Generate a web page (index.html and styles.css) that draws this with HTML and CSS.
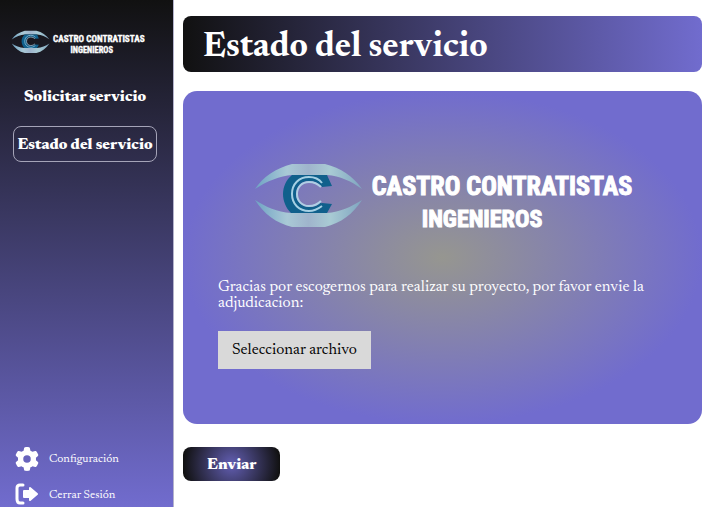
FILE: index.html
```html
<!DOCTYPE html>
<html lang="es">
<head>
<meta charset="utf-8">
<meta name="viewport" content="width=device-width, initial-scale=1">
<title>Estado del servicio</title>
<link rel="stylesheet" href="styles.css">
</head>
<body>
<svg class="sprite" aria-hidden="true">
  <defs>
    <linearGradient id="lid" x1="0" x2="1" y1="0" y2="0">
      <stop offset="0" stop-color="#6fa3c4"/>
      <stop offset=".3" stop-color="#a9c9d6"/>
      <stop offset=".5" stop-color="#9fb4cc"/>
      <stop offset=".7" stop-color="#a9cbd4"/>
      <stop offset="1" stop-color="#7fa5c0"/>
    </linearGradient>
    <symbol id="logo" viewBox="0 0 380 66">
      <path fill="url(#lid)" d="M2 26C10 14 23 5 39 1h33c16 4 28 12 37 25C98 18 87 13 74 12H39C27 13 14 18 2 26Z"/>
      <path fill="url(#lid)" d="M2 37c11 7 22 12 36 13h36c13-1 24-6 35-13C100 51 88 60 72 64H39C23 60 11 51 2 37Z"/>
      <path fill="#10608c" d="M39 12h35l5 11-10 1c-4-5-8-7-13-7-8 0-13 6-13 14s5 14 13 14c5 0 9-2 13-5l10 1-5 9H38C33 45 30 38 30 31s3-14 9-19Z"/>
      <path fill="none" stroke="#a5d0e4" stroke-width="2" d="M69 20c-3-4-8-6-13-6-10 0-17 7-17 17s7 17 17 17c5 0 9-2 13-5"/>
      <path fill="none" stroke="#10608c" stroke-width="2" d="M68 22c-3-4-7-5-12-5-9 0-14 6-14 14s6 14 14 14c5 0 9-1 12-5"/>
      <path fill="none" stroke="#b0cfe4" stroke-width="2" d="M68 24c-3-3-7-5-12-5-7 0-12 5-12 12s5 12 12 12c5 0 9-2 12-5"/>
      <text class="logo-name" x="249" y="32">CASTRO CONTRATISTAS</text>
      <text class="logo-sub" x="229" y="64">INGENIEROS</text>
    </symbol>
  </defs>
</svg>
<div class="layout">
  <aside class="sidebar">
    <svg class="sidebar-logo" role="img" aria-label="Castro Contratistas Ingenieros"><use href="#logo"/></svg>
    <nav class="menu">
      <a class="menu-link" href="#">Solicitar servicio</a>
      <a class="menu-link active" href="#" aria-current="page">Estado del servicio</a>
    </nav>
    <nav class="account">
      <a class="account-link" href="#">
        <svg class="icon" viewBox="0 0 512 512" aria-hidden="true"><path fill="currentColor" d="M495.9 166.6c3.2 8.7.5 18.4-6.4 24.6l-43.3 39.4c1.1 8.3 1.7 16.8 1.7 25.4s-.6 17.1-1.7 25.4l43.3 39.4c6.9 6.2 9.6 15.9 6.4 24.6-4.4 11.9-9.7 23.3-15.8 34.3l-4.7 8.1c-6.6 11-14 21.4-22.1 31.2-5.9 7.2-15.7 9.6-24.5 6.8l-55.7-17.7c-13.4 10.3-28.2 18.9-44 25.4l-12.5 57.1c-2 9.1-9 16.3-18.2 17.8-13.8 2.3-28 3.5-42.5 3.5s-28.7-1.2-42.5-3.5c-9.2-1.5-16.2-8.7-18.2-17.8l-12.5-57.1c-15.8-6.5-30.6-15.1-44-25.4L83.1 425.9c-8.8 2.8-18.6.3-24.5-6.8-8.1-9.8-15.5-20.2-22.1-31.2l-4.7-8.1c-6.1-11-11.4-22.4-15.8-34.3-3.2-8.7-.5-18.4 6.4-24.6l43.3-39.4C64.6 273.1 64 264.6 64 256s.6-17.1 1.7-25.4L22.4 191.2c-6.9-6.2-9.6-15.9-6.4-24.6 4.4-11.9 9.7-23.3 15.8-34.3l4.7-8.1c6.6-11 14-21.4 22.1-31.2 5.9-7.2 15.7-9.6 24.5-6.8l55.7 17.7c13.4-10.3 28.2-18.9 44-25.4l12.5-57.1c2-9.1 9-16.3 18.2-17.8C227.3 1.2 241.5 0 256 0s28.7 1.2 42.5 3.5c9.2 1.5 16.2 8.7 18.2 17.8l12.5 57.1c15.8 6.5 30.6 15.1 44 25.4l55.7-17.7c8.8-2.8 18.6-.3 24.5 6.8 8.1 9.8 15.5 20.2 22.1 31.2l4.7 8.1c6.1 11 11.4 22.4 15.8 34.3zM256 336a80 80 0 1 0 0-160 80 80 0 1 0 0 160z"/></svg>
        <span>Configuración</span>
      </a>
      <a class="account-link" href="#">
        <svg class="icon" viewBox="0 0 24 24" aria-hidden="true"><path fill="none" stroke="currentColor" stroke-width="3" stroke-linecap="round" d="M8 2H5Q2 2 2 5v11q0 4 3 4h3"/><path fill="currentColor" stroke="currentColor" stroke-width="2" stroke-linejoin="round" d="M9 8h6V5l7 6-7 6v-3H9Z"/></svg>
        <span>Cerrar Sesión</span>
      </a>
    </nav>
  </aside>
  <main class="main">
    <h1 class="title">Estado del servicio</h1>
    <form class="form">
      <section class="card">
        <svg class="card-logo" role="img" aria-label="Castro Contratistas Ingenieros"><use href="#logo"/></svg>
        <p class="message">Gracias por escogernos para realizar su proyecto, por favor envie la adjudicacion:</p>
        <input class="file-input" type="file" id="archivo">
        <label class="file-label" for="archivo">Seleccionar archivo</label>
      </section>
      <button class="submit" type="button">Enviar</button>
    </form>
  </main>
</div>
</body>
</html>
```
FILE: styles.css
```css
* {
  box-sizing: border-box;
}

body {
  margin: 0;
  background: #fff;
  color: #fff;
  font-family: Newsreader, "Liberation Serif", serif;
}

a {
  color: inherit;
  text-decoration: none;
}

.sprite {
  position: absolute;
  width: 0;
  height: 0;
}

.logo-name,
.logo-sub {
  font-family: Impact, "Roboto Condensed", "Liberation Sans Narrow", sans-serif;
  font-weight: 700;
  text-anchor: middle;
  fill: #fff;
  stroke: #fff;
  stroke-width: 1px;
}

.logo-name {
  font-size: 26px;
}

.logo-sub {
  font-size: 24px;
}

.layout {
  display: flex;
  min-height: 100vh;
}

.sidebar {
  display: flex;
  flex-direction: column;
  flex: 0 0 174px;
  padding: 30px 16px 0 11px;
  border-right: 1px solid #b4b3cc;
  background: linear-gradient(#111, #716cce);
}

.sidebar-logo {
  width: 134px;
  height: 24px;
}

.menu {
  display: flex;
  flex-direction: column;
  gap: 12px;
  margin-top: 24px;
  padding-left: 2px;
}

.menu-link {
  padding: 9px 0 7px;
  border: 1px solid transparent;
  border-radius: 8px;
  font-size: 16px;
  font-weight: 800;
  line-height: 18px;
  text-align: center;
  white-space: nowrap;
}

.menu-link.active {
  border-color: #a5a4b8;
}

.account {
  display: flex;
  flex-direction: column;
  gap: 12px;
  margin-top: auto;
  padding-left: 4px;
}

.account-link {
  display: flex;
  align-items: center;
  gap: 10px;
  font-size: 12px;
  line-height: 24px;
}

.icon {
  width: 24px;
  height: 24px;
}

.main {
  flex: 1;
  min-width: 0;
  padding: 16px 12px 24px 9px;
}

.title {
  margin: 0 0 19px;
  padding: 12px 20px 4px;
  border-radius: 8px;
  background: linear-gradient(90deg, #111, #716cce);
  font-size: 35px;
  font-weight: 700;
  line-height: 40px;
}

.card {
  display: flex;
  flex-direction: column;
  align-items: flex-start;
  padding: 72px 35px 55px;
  border-radius: 14px;
  background: radial-gradient(closest-side, #969690, #716cce);
}

.card-logo {
  align-self: center;
  width: 100%;
  max-width: 380px;
  height: 66px;
}

.message {
  margin: 50px 0 20px;
  font-size: 16px;
  line-height: 16px;
}

.file-input {
  position: absolute;
  width: 1px;
  height: 1px;
  opacity: 0;
}

.file-label {
  padding: 10px 14px;
  background: #d9d9d9;
  color: #000;
  font-size: 16px;
  line-height: 18px;
  cursor: pointer;
}

.submit {
  display: block;
  margin-top: 23px;
  padding: 9px 24px 7px;
  border: 0;
  border-radius: 8px;
  background: radial-gradient(circle farthest-side, #625eb2, #111);
  color: #fff;
  font-family: inherit;
  font-size: 16px;
  font-weight: 800;
  line-height: 18px;
}
```
